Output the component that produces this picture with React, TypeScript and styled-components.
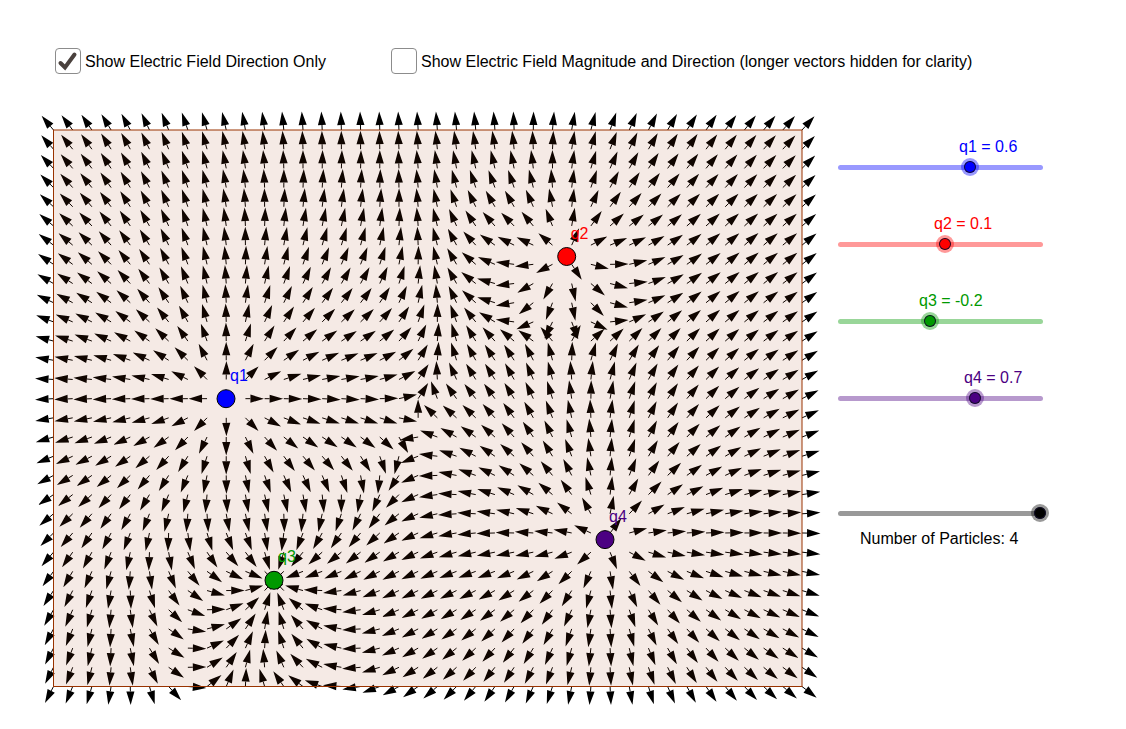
import React, { useState } from "react";
import styled, { createGlobalStyle } from "styled-components";

const GlobalStyle = createGlobalStyle`
  *, *::before, *::after { box-sizing: border-box; }
  body {
    margin: 0;
    background: #fff;
    color: #000;
    font: 16px/20px "Liberation Sans", Arial, sans-serif;
  }
`;

const Page = styled.main`
  padding: 48px 83px 20px 34px;
`;

const Options = styled.div`
  display: flex;
  flex-wrap: wrap;
  padding-left: 21px;
  margin-bottom: 36px;
`;

const Option = styled.label`
  display: flex;
  align-items: center;
  gap: 4px;
  min-width: 336px;
  white-space: nowrap;
`;

const OptionText = styled.span`
  padding-top: 2px;
  line-height: 24px;
`;

const TickBox = styled.span`
  display: grid;
  width: 26px;
  height: 26px;

  input, svg { grid-area: 1 / 1; width: 26px; height: 26px; }
  svg { pointer-events: none; }
`;

const TickInput = styled.input`
  appearance: none;
  margin: 0;
  background: #fff;
  border: 1px solid #8c8c8c;
  border-radius: 4px;
`;

const Workspace = styled.div`
  display: flex;
  align-items: flex-start;
  gap: 16px;
`;

const Plot = styled.svg`
  display: block;
  flex: 1;
  min-width: 0;
  font: 16px "Liberation Sans", Arial, sans-serif;
`;

const Controls = styled.aside`
  flex: 0 0 205px;
  display: flex;
  flex-direction: column;
  gap: 38px;
  padding-top: 27px;
`;

const SliderGroup = styled.div<{ $color: string }>`
  display: flex;
  flex-direction: column;
  gap: 1px;
  color: ${(p) => p.$color};
`;

const CountGroup = styled(SliderGroup)`
  gap: 7px;
  margin-top: 59px;
`;

const SliderLabel = styled.label`
  white-space: nowrap;
`;

const CountLabel = styled(SliderLabel)`
  padding-left: 22px;
`;

const SliderTrack = styled.div<{ $soft: string }>`
  display: grid;
  align-items: center;
  height: 18px;

  &::before {
    content: "";
    grid-area: 1 / 1;
    height: 5px;
    border-radius: 3px;
    background: ${(p) => p.$soft};
  }
`;

const SliderInput = styled.input<{ $color: string; $soft: string }>`
  appearance: none;
  grid-area: 1 / 1;
  justify-self: start;
  width: calc(100% + 13px);
  height: 18px;
  margin: 0 -7px;
  background: transparent;

  &::-webkit-slider-thumb {
    appearance: none;
    width: 18px;
    height: 18px;
    border: 3px solid ${(p) => p.$soft};
    border-radius: 50%;
    background: ${(p) => p.$color};
    background-clip: padding-box;
    box-shadow: inset 0 0 0 1px #14102a;
  }
`;

interface Particle {
  name: string;
  x: number;
  y: number;
  charge: number;
  color: string;
  soft: string;
}

const initialParticles: Particle[] = [
  { name: "q1", x: 192, y: 288.7, charge: 0.6, color: "#0000ff", soft: "rgba(0,0,255,.4)" },
  { name: "q2", x: 532.7, y: 146.5, charge: 0.1, color: "#ff0000", soft: "rgba(255,0,0,.4)" },
  { name: "q3", x: 240, y: 470.3, charge: -0.2, color: "#009900", soft: "rgba(0,153,0,.4)" },
  { name: "q4", x: 571, y: 429.6, charge: 0.7, color: "#4b0082", soft: "rgba(75,0,130,.4)" },
];

const BOX = { x: 19.5, y: 20, width: 748.5, height: 556.5 };
const COLUMNS = 40;
const ROWS = 30;
const STEP_X = BOX.width / (COLUMNS - 1);
const STEP_Y = BOX.height / (ROWS - 1);
const ARROW = 18.5;
const HEAD = 13.5;

/* Coulomb field of the point charges at (x, y) */
function fieldAt(x: number, y: number, particles: Particle[]) {
  let ex = 0;
  let ey = 0;
  for (const p of particles) {
    const dx = x - p.x;
    const dy = y - p.y;
    const r = Math.hypot(dx, dy);
    if (r < 3) return null;
    ex += (p.charge * dx) / r ** 3;
    ey += (p.charge * dy) / r ** 3;
  }
  return { ex, ey, size: Math.hypot(ex, ey) };
}

function FieldArrows({ particles, scaled }: { particles: Particle[]; scaled: boolean }) {
  let shafts = "";
  let heads = "";
  for (let c = 0; c < COLUMNS; c++) {
    for (let r = 0; r < ROWS; r++) {
      const x = BOX.x + c * STEP_X;
      const y = BOX.y + r * STEP_Y;
      const f = fieldAt(x, y, particles);
      if (!f || f.size === 0) continue;
      const length = scaled ? f.size * 1200000 : ARROW;
      if (length > 60) continue;
      const head = Math.min(HEAD, length * 0.75);
      const half = head * 0.3;
      const ux = f.ex / f.size;
      const uy = f.ey / f.size;
      const bx = x + ux * (length - head);
      const by = y + uy * (length - head);
      const n = (v: number) => v.toFixed(2);
      shafts += `M${n(x)} ${n(y)}L${n(bx)} ${n(by)}`;
      heads += `M${n(x + ux * length)} ${n(y + uy * length)}L${n(bx - uy * half)} ${n(by + ux * half)}L${n(bx + uy * half)} ${n(by - ux * half)}Z`;
    }
  }
  return (
    <>
      <path d={shafts} stroke="#000" strokeWidth="1" fill="none" />
      <path d={heads} fill="#000" />
    </>
  );
}

interface CheckProps {
  label: string;
  checked: boolean;
  onChange: (value: boolean) => void;
}

function Check({ label, checked, onChange }: CheckProps) {
  return (
    <Option>
      <TickBox>
        <TickInput type="checkbox" checked={checked} onChange={(e) => onChange(e.target.checked)} />
        {checked && (
          <svg viewBox="0 0 26 26" aria-hidden="true">
            <path d="M5.5 15L10 19.5L19.5 6.5" fill="none" stroke="#4a413d" strokeWidth="4" strokeLinecap="round" />
          </svg>
        )}
      </TickBox>
      <OptionText>{label}</OptionText>
    </Option>
  );
}

export default function App() {
  const [particles, setParticles] = useState(initialParticles);
  const [count, setCount] = useState(4);
  const [direction, setDirection] = useState(true);
  const [magnitude, setMagnitude] = useState(false);
  const active = particles.slice(0, count);

  const setCharge = (name: string, charge: number) =>
    setParticles((list) => list.map((p) => (p.name === name ? { ...p, charge } : p)));

  return (
    <Page>
      <GlobalStyle />
      <Options>
        <Check label="Show Electric Field Direction Only" checked={direction} onChange={setDirection} />
        <Check
          label="Show Electric Field Magnitude and Direction (longer vectors hidden for clarity)"
          checked={magnitude}
          onChange={setMagnitude}
        />
      </Options>
      <Workspace>
        <Plot viewBox="0 0 788 598" role="img" aria-label="Electric field">
          {direction && <FieldArrows particles={active} scaled={false} />}
          {magnitude && <FieldArrows particles={active} scaled />}
          <rect {...BOX} fill="#993300" fillOpacity="0.1" stroke="#993300" strokeWidth="1" />
          {active.map((p) => (
            <circle key={p.name} cx={p.x} cy={p.y} r="9" fill={p.color} stroke="#000" strokeWidth="1" />
          ))}
          {active.map((p) => (
            <text key={p.name} x={p.x + 4} y={p.y - 18} fill={p.color}>
              {p.name}
            </text>
          ))}
        </Plot>
        <Controls>
          {active.map((p) => (
            <SliderGroup key={p.name} $color={p.color}>
              <SliderLabel
                htmlFor={p.name}
                style={{ marginLeft: `calc((100% - 5px) * ${(p.charge + 2) / 4} - 9px)` }}
              >
                {`${p.name} = ${p.charge}`}
              </SliderLabel>
              <SliderTrack $soft={p.soft}>
                <SliderInput
                  id={p.name}
                  type="range"
                  min={-2}
                  max={2}
                  step={0.1}
                  value={p.charge}
                  $color={p.color}
                  $soft={p.soft}
                  onChange={(e) => setCharge(p.name, Number(e.target.value))}
                />
              </SliderTrack>
            </SliderGroup>
          ))}
          <CountGroup $color="#000">
            <SliderTrack $soft="rgba(0,0,0,.4)">
              <SliderInput
                id="count"
                type="range"
                min={1}
                max={4}
                value={count}
                $color="#000"
                $soft="rgba(0,0,0,.4)"
                onChange={(e) => setCount(Number(e.target.value))}
              />
            </SliderTrack>
            <CountLabel htmlFor="count">{`Number of Particles: ${count}`}</CountLabel>
          </CountGroup>
        </Controls>
      </Workspace>
    </Page>
  );
}
